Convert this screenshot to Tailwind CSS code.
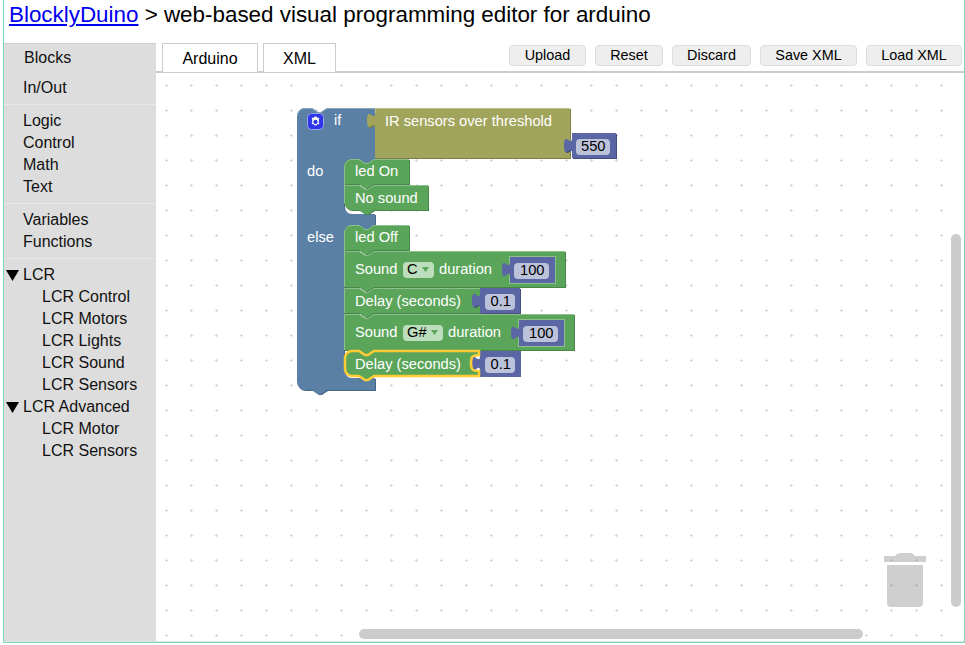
<!DOCTYPE html>
<html lang="en">
<head>
<meta charset="UTF-8">
<title>BlocklyDuino</title>
<script src="https://cdn.jsdelivr.net/npm/@tailwindcss/browser@4"></script>
</head>
<body class="bg-white font-['Liberation_Sans',Arial,sans-serif] text-black overflow-hidden">
<div class="ml-[3px] w-[962px] h-[643px] border-l border-r border-b border-[#7fd6b4] flex flex-col">

  <!-- header -->
  <h1 class="h-[43px] pl-[5px] pt-[2px] text-[22.4px] leading-[26px] font-normal whitespace-nowrap"><a href="#" class="text-[#0000ee] underline">BlocklyDuino</a> &gt; web-based visual programming editor for arduino</h1>

  <div class="flex flex-1 min-h-0 border-b border-[#e2e2e2]">
    <!-- toolbox -->
    <aside class="w-[152px] bg-[#dddddd] border-t border-[#cfcfcf] text-[16px] leading-[22px] text-[#111]">
      <div class="h-[29px] pl-[20px] pt-[3px]">Blocks</div>
      <div class="h-[32px] pl-[19px] pt-[4px] border-b border-[#e8e8e8]">In/Out</div>
      <div class="pl-[19px] pt-[5px] pb-[5px] border-b border-[#e8e8e8]">
        <div>Logic</div>
        <div>Control</div>
        <div>Math</div>
        <div>Text</div>
      </div>
      <div class="pl-[19px] pt-[5px] pb-[5px] border-b border-[#e8e8e8]">
        <div>Variables</div>
        <div>Functions</div>
      </div>
      <div class="pt-[5px]">
        <div class="flex items-center"><svg class="ml-[2px] mr-[4px]" width="13" height="11" viewBox="0 0 13 11"><path d="M0,0 H13 L6.5,11 z" fill="#000"/></svg>LCR</div>
        <div class="pl-[38px]">LCR Control</div>
        <div class="pl-[38px]">LCR Motors</div>
        <div class="pl-[38px]">LCR Lights</div>
        <div class="pl-[38px]">LCR Sound</div>
        <div class="pl-[38px]">LCR Sensors</div>
        <div class="flex items-center"><svg class="ml-[2px] mr-[4px]" width="13" height="11" viewBox="0 0 13 11"><path d="M0,0 H13 L6.5,11 z" fill="#000"/></svg>LCR Advanced</div>
        <div class="pl-[38px]">LCR Motor</div>
        <div class="pl-[38px]">LCR Sensors</div>
      </div>
    </aside>

    <div class="flex-1 flex flex-col min-w-0">
      <!-- tabs + buttons -->
      <div class="h-[30px] flex border-b-2 border-[#cccccc] pl-[6px]">
        <div class="w-[96px] h-[29px] bg-white border border-b-0 border-[#cccccc] text-[16px] leading-[29px] text-center">Arduino</div>
        <div class="ml-[5px] w-[73px] h-[29px] bg-white border border-b-0 border-[#cccccc] text-[16px] leading-[29px] text-center">XML</div>
        <div class="ml-auto mr-[2px] mt-[2px] flex gap-[9px] text-[14.4px]">
          <button class="w-[77px] h-[21px] leading-[19px] bg-[#eeeeee] border border-[#dddddd] rounded-[4px]">Upload</button>
          <button class="w-[68px] h-[21px] leading-[19px] bg-[#eeeeee] border border-[#dddddd] rounded-[4px]">Reset</button>
          <button class="w-[79px] h-[21px] leading-[19px] bg-[#eeeeee] border border-[#dddddd] rounded-[4px]">Discard</button>
          <button class="w-[97px] h-[21px] leading-[19px] bg-[#eeeeee] border border-[#dddddd] rounded-[4px]">Save XML</button>
          <button class="w-[96px] h-[21px] leading-[19px] bg-[#eeeeee] border border-[#dddddd] rounded-[4px]">Load XML</button>
        </div>
      </div>

      <!-- workspace -->
      <div class="relative flex-1 min-h-0 overflow-hidden bg-white">
        <svg class="absolute inset-0 block" width="808" height="568" viewBox="156 73 808 568" font-family="Liberation Sans, Arial, sans-serif" font-size="14.67">
          <defs>
            <pattern id="grid" x="165" y="84" width="25" height="25" patternUnits="userSpaceOnUse">
              <rect x="0" y="1" width="3" height="1" fill="#d8d8d8"/>
              <rect x="1" y="0" width="1" height="3" fill="#d8d8d8"/>
            </pattern>
          </defs>
          <rect x="156" y="73" width="808" height="568" fill="url(#grid)"/>

          <!-- if / do / else -->
          <path transform="translate(1,1)" fill="#496684" d="M297,116 A8,8 0 0 1 305,108 H312 l6,4 3,0 6,-4 H375 V159 H374 l-6,4 -3,0 -6,-4 H352 a8,8 0 0 0 -8,8 V206 a8,8 0 0 0 8,8 H375 V225 H374 l-6,4 -3,0 -6,-4 H352 a8,8 0 0 0 -8,8 V370 a8,8 0 0 0 8,8 H375 V390 H327 l-6,4 -3,0 -6,-4 H305 a8,8 0 0 1 -8,-8 z"/>
          <path fill="#5b80a5" d="M297,116 A8,8 0 0 1 305,108 H312 l6,4 3,0 6,-4 H375 V159 H374 l-6,4 -3,0 -6,-4 H352 a8,8 0 0 0 -8,8 V206 a8,8 0 0 0 8,8 H375 V225 H374 l-6,4 -3,0 -6,-4 H352 a8,8 0 0 0 -8,8 V370 a8,8 0 0 0 8,8 H375 V390 H327 l-6,4 -3,0 -6,-4 H305 a8,8 0 0 1 -8,-8 z"/>
          <path fill="none" stroke="#8ca6c0" stroke-width="1" d="M297.5,116 A7.5,7.5 0 0 1 305,108.5 H312 l6,4 3,0 6,-4 H375"/>
          <rect x="307.5" y="113.5" width="16" height="16" rx="4" fill="#2f35e8" stroke="#9aa6e8" stroke-width="1"/>
          <path fill="#ffffff" fill-rule="evenodd" d="M315.5,116.5 l1.3,0.2 0.3,1.4 1.3,-0.5 1,1.2 -0.9,1.1 0.7,1.1 -0.7,1.1 0.9,1.1 -1,1.2 -1.3,-0.5 -0.3,1.4 -1.3,0.2 -1.3,-0.2 -0.3,-1.4 -1.3,0.5 -1,-1.2 0.9,-1.1 -0.7,-1.1 0.7,-1.1 -0.9,-1.1 1,-1.2 1.3,0.5 0.3,-1.4 z M315.5,119.8 a2.2,2.2 0 1 0 0.01,0 z"/>
          <text x="334" y="125" fill="#fff">if</text>
          <text x="307" y="176" fill="#fff">do</text>
          <text x="307" y="242" fill="#fff">else</text>

          <!-- IR sensors -->
          <path transform="translate(1,1)" fill="#7d7d45" d="M375,108 H570 V158 H375 V128 c0,-10 -8,8 -8,-7.5 s8,2.5 8,-7.5 z"/>
          <path fill="#a1a55b" d="M375,108 H570 V158 H375 V128 c0,-10 -8,8 -8,-7.5 s8,2.5 8,-7.5 z"/>
          <path fill="none" stroke="#c0c08c" d="M375.5,113 V108.5 H570"/>
          <text x="385" y="126" fill="#fff">IR sensors over threshold</text>

          <!-- 550 -->
          <path transform="translate(1,1)" fill="#454e7d" d="M572,133 H616 V158 H572 V153 c0,-10 -8,8 -8,-7.5 s8,2.5 8,-7.5 z"/>
          <path fill="#5b67a5" d="M572,133 H616 V158 H572 V153 c0,-10 -8,8 -8,-7.5 s8,2.5 8,-7.5 z"/>
          <rect x="576" y="139" width="34" height="16" rx="4" fill="#bdc2db"/>
          <text x="581" y="151" fill="#000">550</text>

          <!-- led On -->
          <path transform="translate(1,1)" fill="#498449" d="M344,167 A8,8 0 0 1 352,159 H359 l6,4 3,0 6,-4 H409 V184 H374 l-6,4 -3,0 -6,-4 H344 z"/>
          <path fill="#5ba55b" d="M344,167 A8,8 0 0 1 352,159 H359 l6,4 3,0 6,-4 H409 V184 H374 l-6,4 -3,0 -6,-4 H344 z"/>
          <path fill="none" stroke="#8cc08c" d="M344.5,185 V167 A7.5,7.5 0 0 1 352,159.5 H359 l6,4 3,0 6,-4 H409"/>
          <text x="355" y="176" fill="#fff">led On</text>

          <!-- No sound -->
          <path transform="translate(1,1)" fill="#498449" d="M344,185 H359 l6,4 3,0 6,-4 H428 V210 H374 l-6,4 -3,0 -6,-4 H352 a8,8 0 0 1 -8,-8 z"/>
          <path fill="#5ba55b" d="M344,185 H359 l6,4 3,0 6,-4 H428 V210 H374 l-6,4 -3,0 -6,-4 H352 a8,8 0 0 1 -8,-8 z"/>
          <path fill="none" stroke="#8cc08c" d="M344.5,203 V185.5 H359 l6,4 3,0 6,-4 H428"/>
          <text x="355" y="203" fill="#fff">No sound</text>

          <!-- led Off -->
          <path transform="translate(1,1)" fill="#498449" d="M344,233 A8,8 0 0 1 352,225 H359 l6,4 3,0 6,-4 H409 V250 H374 l-6,4 -3,0 -6,-4 H344 z"/>
          <path fill="#5ba55b" d="M344,233 A8,8 0 0 1 352,225 H359 l6,4 3,0 6,-4 H409 V250 H374 l-6,4 -3,0 -6,-4 H344 z"/>
          <path fill="none" stroke="#8cc08c" d="M344.5,251 V233 A7.5,7.5 0 0 1 352,225.5 H359 l6,4 3,0 6,-4 H409"/>
          <text x="355" y="242" fill="#fff">led Off</text>

          <!-- Sound C -->
          <path transform="translate(1,1)" fill="#498449" d="M344,251 H359 l6,4 3,0 6,-4 H565 V287 H374 l-6,4 -3,0 -6,-4 H344 z"/>
          <path fill="#5ba55b" d="M344,251 H359 l6,4 3,0 6,-4 H565 V287 H374 l-6,4 -3,0 -6,-4 H344 z"/>
          <path fill="none" stroke="#8cc08c" d="M344.5,287 V251.5 H359 l6,4 3,0 6,-4 H565"/>
          <text x="355" y="274" fill="#fff">Sound</text>
          <rect x="403" y="262" width="31" height="16" rx="4" fill="#bddebd"/>
          <text x="407" y="274" fill="#000">C</text>
          <path d="M422,267 h7 l-3.5,5 z" fill="#5ba55b"/>
          <text x="439" y="274" fill="#fff">duration</text>
          <rect x="509.5" y="256.5" width="46" height="27" fill="#5b67a5" stroke="#8cc08c"/>
          <path fill="#5b67a5" d="M510,277 c0,-10 -8,8 -8,-7.5 s8,2.5 8,-7.5 z"/>
          <rect x="514" y="263" width="35" height="16" rx="4" fill="#bdc2db"/>
          <text x="520" y="275" fill="#000">100</text>

          <!-- Delay -->
          <path transform="translate(1,1)" fill="#498449" d="M344,288 H359 l6,4 3,0 6,-4 H480 V313 H374 l-6,4 -3,0 -6,-4 H344 z"/>
          <path fill="#5ba55b" d="M344,288 H359 l6,4 3,0 6,-4 H480 V313 H374 l-6,4 -3,0 -6,-4 H344 z"/>
          <path fill="none" stroke="#8cc08c" d="M344.5,313 V288.5 H359 l6,4 3,0 6,-4 H480"/>
          <text x="355" y="306" fill="#fff">Delay (seconds)</text>
          <path transform="translate(1,1)" fill="#454e7d" d="M480,288 H520 V313 H480 V308 c0,-10 -8,8 -8,-7.5 s8,2.5 8,-7.5 z"/>
          <path fill="#5b67a5" d="M480,288 H520 V313 H480 V308 c0,-10 -8,8 -8,-7.5 s8,2.5 8,-7.5 z"/>
          <rect x="485" y="294" width="30" height="16" rx="4" fill="#bdc2db"/>
          <text x="490.5" y="306" fill="#000">0.1</text>

          <!-- Sound G# -->
          <path transform="translate(1,1)" fill="#498449" d="M344,314 H359 l6,4 3,0 6,-4 H574 V350 H374 l-6,4 -3,0 -6,-4 H344 z"/>
          <path fill="#5ba55b" d="M344,314 H359 l6,4 3,0 6,-4 H574 V350 H374 l-6,4 -3,0 -6,-4 H344 z"/>
          <path fill="none" stroke="#8cc08c" d="M344.5,350 V314.5 H359 l6,4 3,0 6,-4 H574"/>
          <text x="355" y="337" fill="#fff">Sound</text>
          <rect x="403" y="325" width="40" height="16" rx="4" fill="#bddebd"/>
          <text x="407" y="337" fill="#000">G#</text>
          <path d="M431,330 h7 l-3.5,5 z" fill="#5ba55b"/>
          <text x="448" y="337" fill="#fff">duration</text>
          <rect x="518.5" y="319.5" width="46" height="27" fill="#5b67a5" stroke="#8cc08c"/>
          <path fill="#5b67a5" d="M519,340 c0,-10 -8,8 -8,-7 s8,2.5 8,-7 z"/>
          <rect x="523" y="326" width="35" height="16" rx="4" fill="#bdc2db"/>
          <text x="529" y="338" fill="#000">100</text>

          <!-- Delay, selected -->
          <path fill="#5b67a5" d="M480,351 H521 V377 H480 V371 c0,-10 -8,8 -8,-7.5 s8,2.5 8,-7.5 z"/>
          <rect x="485" y="357" width="30" height="16" rx="4" fill="#bdc2db"/>
          <text x="490.5" y="369" fill="#000">0.1</text>
          <path fill="#5ba55b" stroke="#ffcc33" stroke-width="2.5" d="M345,358 A7,7 0 0 1 352,351 H359 l6,4 3,0 6,-4 H479 V355 c-8,0 -8,3 -8,8 s0,8 8,8 V376 H374 l-6,4 -3,0 -6,-4 H352 a7,7 0 0 1 -7,-7 z"/>
          <text x="355" y="369" fill="#fff">Delay (seconds)</text>

          <!-- trash -->
          <g fill="#888888" fill-opacity="0.4">
            <path d="M884,556 H895 Q897,553 900,553 H910 Q913,553 915,556 H926 V562 H884 z"/>
            <path d="M887,565 H923 V603 a4,4 0 0 1 -4,4 H891 a4,4 0 0 1 -4,-4 z"/>
          </g>

          <!-- scrollbars -->
          <rect x="951" y="234" width="10" height="373" rx="5" fill="#cccccc"/>
          <rect x="359" y="629" width="504" height="10" rx="5" fill="#cccccc"/>
        </svg>
      </div>
    </div>
  </div>
</div>
</body>
</html>
